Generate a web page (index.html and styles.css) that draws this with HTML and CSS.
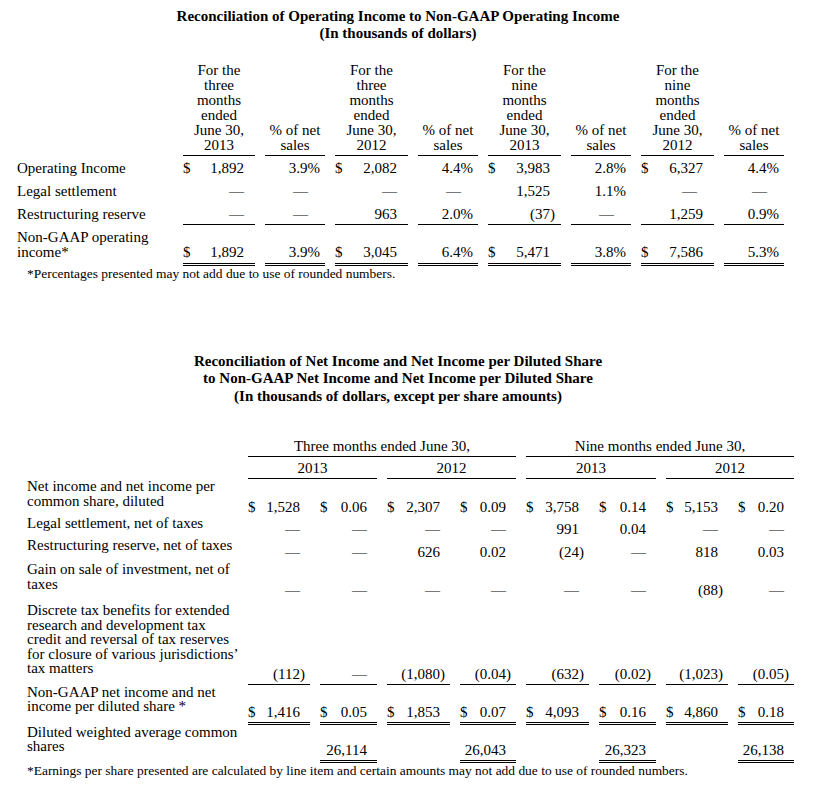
FILE: index.html
```html
<!DOCTYPE html>
<html>
<head>
<meta charset="utf-8">
<link rel="stylesheet" href="styles.css">
</head>
<body>
<div class="page">
  <h1 class="title">Reconciliation of Operating Income to Non-GAAP Operating Income<br>(In thousands of dollars)</h1>

  <table class="tbl op">
    <colgroup>
      <col class="w-lab"><col class="w-72"><col class="w-60"><col class="w-73"><col class="w-60"><col class="w-73"><col class="w-60"><col class="w-73"><col class="w-60">
    </colgroup>
    <thead>
      <tr>
        <th class="blank"></th>
        <th class="h">For the<br>three<br>months<br>ended<br>June 30,<br>2013</th>
        <th class="h">% of net<br>sales</th>
        <th class="h">For the<br>three<br>months<br>ended<br>June 30,<br>2012</th>
        <th class="h">% of net<br>sales</th>
        <th class="h">For the<br>nine<br>months<br>ended<br>June 30,<br>2013</th>
        <th class="h">% of net<br>sales</th>
        <th class="h">For the<br>nine<br>months<br>ended<br>June 30,<br>2012</th>
        <th class="h">% of net<br>sales</th>
      </tr>
    </thead>
    <tbody>
      <tr>
        <td class="lab">Operating Income</td>
        <td class="v"><span class="cur">$</span>1,892</td>
        <td class="v pc">3.9%</td>
        <td class="v"><span class="cur">$</span>2,082</td>
        <td class="v pc">4.4%</td>
        <td class="v"><span class="cur">$</span>3,983</td>
        <td class="v pc">2.8%</td>
        <td class="v"><span class="cur">$</span>6,327</td>
        <td class="v pc">4.4%</td>
      </tr>
      <tr>
        <td class="lab">Legal settlement</td>
        <td class="v">—</td>
        <td class="v pd">—</td>
        <td class="v">—</td>
        <td class="v pd">—</td>
        <td class="v">1,525</td>
        <td class="v pc">1.1%</td>
        <td class="v pd">—</td>
        <td class="v pd">—</td>
      </tr>
      <tr>
        <td class="lab">Restructuring reserve</td>
        <td class="v u">—</td>
        <td class="v pd u">—</td>
        <td class="v u">963</td>
        <td class="v pc u">2.0%</td>
        <td class="v u">(37<span class="par">)</span></td>
        <td class="v pd u">—</td>
        <td class="v u">1,259</td>
        <td class="v pc u">0.9%</td>
      </tr>
      <tr>
        <td class="lab tot">Non-GAAP operating<br>income*</td>
        <td class="v uu"><span class="cur">$</span>1,892</td>
        <td class="v pc uu">3.9%</td>
        <td class="v uu"><span class="cur">$</span>3,045</td>
        <td class="v pc uu">6.4%</td>
        <td class="v uu"><span class="cur">$</span>5,471</td>
        <td class="v pc uu">3.8%</td>
        <td class="v uu"><span class="cur">$</span>7,586</td>
        <td class="v pc uu">5.3%</td>
      </tr>
    </tbody>
  </table>
  <p class="note">*Percentages presented may not add due to use of rounded numbers.</p>

  <h1 class="title title-ni">Reconciliation of Net Income and Net Income per Diluted Share<br>to Non-GAAP Net Income and Net Income per Diluted Share<br>(In thousands of dollars, except per share amounts)</h1>

  <table class="tbl ni">
    <colgroup>
      <col class="w-lab2"><col class="w-62"><col class="w-57"><col class="w-63"><col class="w-56"><col class="w-63"><col class="w-57"><col class="w-62"><col class="w-56">
    </colgroup>
    <thead>
      <tr>
        <th class="blank"></th>
        <th class="g1" colspan="4">Three months ended June 30,</th>
        <th class="g1" colspan="4">Nine months ended June 30,</th>
      </tr>
      <tr>
        <th class="blank"></th>
        <th class="g2" colspan="2">2013</th>
        <th class="g2" colspan="2">2012</th>
        <th class="g2" colspan="2">2013</th>
        <th class="g2" colspan="2">2012</th>
      </tr>
    </thead>
    <tbody>
      <tr>
        <td class="lab r-net">Net income and net income per<br>common share, diluted</td>
        <td class="v"><span class="cur">$</span>1,528</td>
        <td class="v"><span class="cur">$</span>0.06</td>
        <td class="v"><span class="cur">$</span>2,307</td>
        <td class="v"><span class="cur">$</span>0.09</td>
        <td class="v"><span class="cur">$</span>3,758</td>
        <td class="v"><span class="cur">$</span>0.14</td>
        <td class="v"><span class="cur">$</span>5,153</td>
        <td class="v"><span class="cur">$</span>0.20</td>
      </tr>
      <tr>
        <td class="lab">Legal settlement, net of taxes</td>
        <td class="v">—</td>
        <td class="v">—</td>
        <td class="v">—</td>
        <td class="v">—</td>
        <td class="v">991</td>
        <td class="v">0.04</td>
        <td class="v">—</td>
        <td class="v">—</td>
      </tr>
      <tr>
        <td class="lab">Restructuring reserve, net of taxes</td>
        <td class="v">—</td>
        <td class="v">—</td>
        <td class="v">626</td>
        <td class="v">0.02</td>
        <td class="v">(24<span class="par">)</span></td>
        <td class="v">—</td>
        <td class="v">818</td>
        <td class="v">0.03</td>
      </tr>
      <tr>
        <td class="lab r-gain">Gain on sale of investment, net of<br>taxes</td>
        <td class="v">—</td>
        <td class="v">—</td>
        <td class="v">—</td>
        <td class="v">—</td>
        <td class="v">—</td>
        <td class="v">—</td>
        <td class="v">(88<span class="par">)</span></td>
        <td class="v">—</td>
      </tr>
      <tr>
        <td class="lab r-disc">Discrete tax benefits for extended<br>research and development tax<br>credit and reversal of tax reserves<br>for closure of various jurisdictions’<br>tax matters</td>
        <td class="v u">(112<span class="par">)</span></td>
        <td class="v u">—</td>
        <td class="v u">(1,080<span class="par">)</span></td>
        <td class="v u">(0.04<span class="par">)</span></td>
        <td class="v u">(632<span class="par">)</span></td>
        <td class="v u">(0.02<span class="par">)</span></td>
        <td class="v u">(1,023<span class="par">)</span></td>
        <td class="v u">(0.05<span class="par">)</span></td>
      </tr>
      <tr>
        <td class="lab r-tot">Non-GAAP net income and net<br>income per diluted share *</td>
        <td class="v uu"><span class="cur">$</span>1,416</td>
        <td class="v uu"><span class="cur">$</span>0.05</td>
        <td class="v uu"><span class="cur">$</span>1,853</td>
        <td class="v uu"><span class="cur">$</span>0.07</td>
        <td class="v uu"><span class="cur">$</span>4,093</td>
        <td class="v uu"><span class="cur">$</span>0.16</td>
        <td class="v uu"><span class="cur">$</span>4,860</td>
        <td class="v uu"><span class="cur">$</span>0.18</td>
      </tr>
      <tr>
        <td class="lab r-sh">Diluted weighted average common<br>shares</td>
        <td class="v"></td>
        <td class="v uu">26,114</td>
        <td class="v"></td>
        <td class="v uu">26,043</td>
        <td class="v"></td>
        <td class="v uu">26,323</td>
        <td class="v"></td>
        <td class="v uu">26,138</td>
      </tr>
    </tbody>
  </table>
  <p class="note">*Earnings per share presented are calculated by line item and certain amounts may not add due to use of rounded numbers.</p>
</div>
</body>
</html>
```

FILE: styles.css
```css
html, body {
  margin: 0;
  padding: 0;
  background: #fff;
}

body {
  padding-top: 8px;
  color: #000;
  font-family: "Liberation Serif", "Times New Roman", serif;
  font-size: 15px;
}

.page {
  width: 796px;
}

.title {
  margin: 0;
  font-size: 15px;
  font-weight: bold;
  line-height: 17px;
  text-align: center;
}

.title-ni {
  margin-top: 72px;
  line-height: 17.5px;
}

.tbl {
  table-layout: fixed;
  border-collapse: separate;
  border-spacing: 10px 0;
  width: 787px;
}

.tbl th,
.tbl td {
  padding: 0;
  font-weight: normal;
  white-space: nowrap;
}

.op {
  margin: 20.5px 0 0 7px;
}

.ni {
  margin: 34px 0 0 17px;
}

.w-lab { width: 156px; }
.w-lab2 { width: 211px; }
.w-72 { width: 72px; }
.w-60 { width: 60px; }
.w-73 { width: 73px; }
.w-62 { width: 62px; }
.w-57 { width: 57px; }
.w-63 { width: 63px; }
.w-56 { width: 56px; }

/* header cells */
.tbl .h,
.tbl .g1 {
  line-height: 15px;
  text-align: center;
  vertical-align: bottom;
  padding-bottom: 2px;
  border-bottom: 1px solid #000;
}

.tbl .g2 {
  line-height: 15px;
  text-align: center;
  vertical-align: bottom;
  padding: 4px 0 2px;
  border-bottom: 1px solid #000;
}

/* labels */
.lab {
  text-align: left;
  vertical-align: bottom;
}

.op .lab {
  line-height: 15px;
  padding: 5px 0 3px;
}

.op .lab.tot {
  line-height: 14.5px;
  padding: 5.75px 0 6.25px;
}

.ni .lab {
  line-height: 14.5px;
  padding: 0 0 8px;
}

.ni .lab.r-net {
  padding: 0 0 7.5px;
}

.ni .lab.r-gain {
  line-height: 15px;
  padding: 1px 0 7px;
}

.ni .lab.r-disc {
  padding: 4.75px 0 8.75px;
}

.ni .lab.r-tot {
  padding: 0 0 11px;
}

.ni .lab.r-sh {
  padding: 0 0 9.5px;
}

/* values */
.v {
  text-align: right;
  vertical-align: bottom;
  line-height: 15px;
}

.op .v {
  padding: 5px 11px 3px 0;
}

.op .v.pc {
  padding-right: 5px;
}

.op .v.pd {
  padding-right: 17px;
}

.op .v.u {
  padding-bottom: 2px;
  border-bottom: 1px solid #000;
}

.op .v.uu {
  padding-bottom: 3px;
  border-bottom: 3px double #000;
}

.ni .v {
  padding: 0 10px 1px 0;
}

.ni .v.u {
  padding-bottom: 1.5px;
  border-bottom: 1px solid #000;
}

.ni .v.uu {
  padding-bottom: 2px;
  border-bottom: 3px double #000;
}

.cur {
  float: left;
}

.par {
  margin-right: -5px;
}

.note {
  margin: 0 0 0 27px;
  font-size: 13.45px;
  line-height: 15px;
  white-space: nowrap;
}
```
